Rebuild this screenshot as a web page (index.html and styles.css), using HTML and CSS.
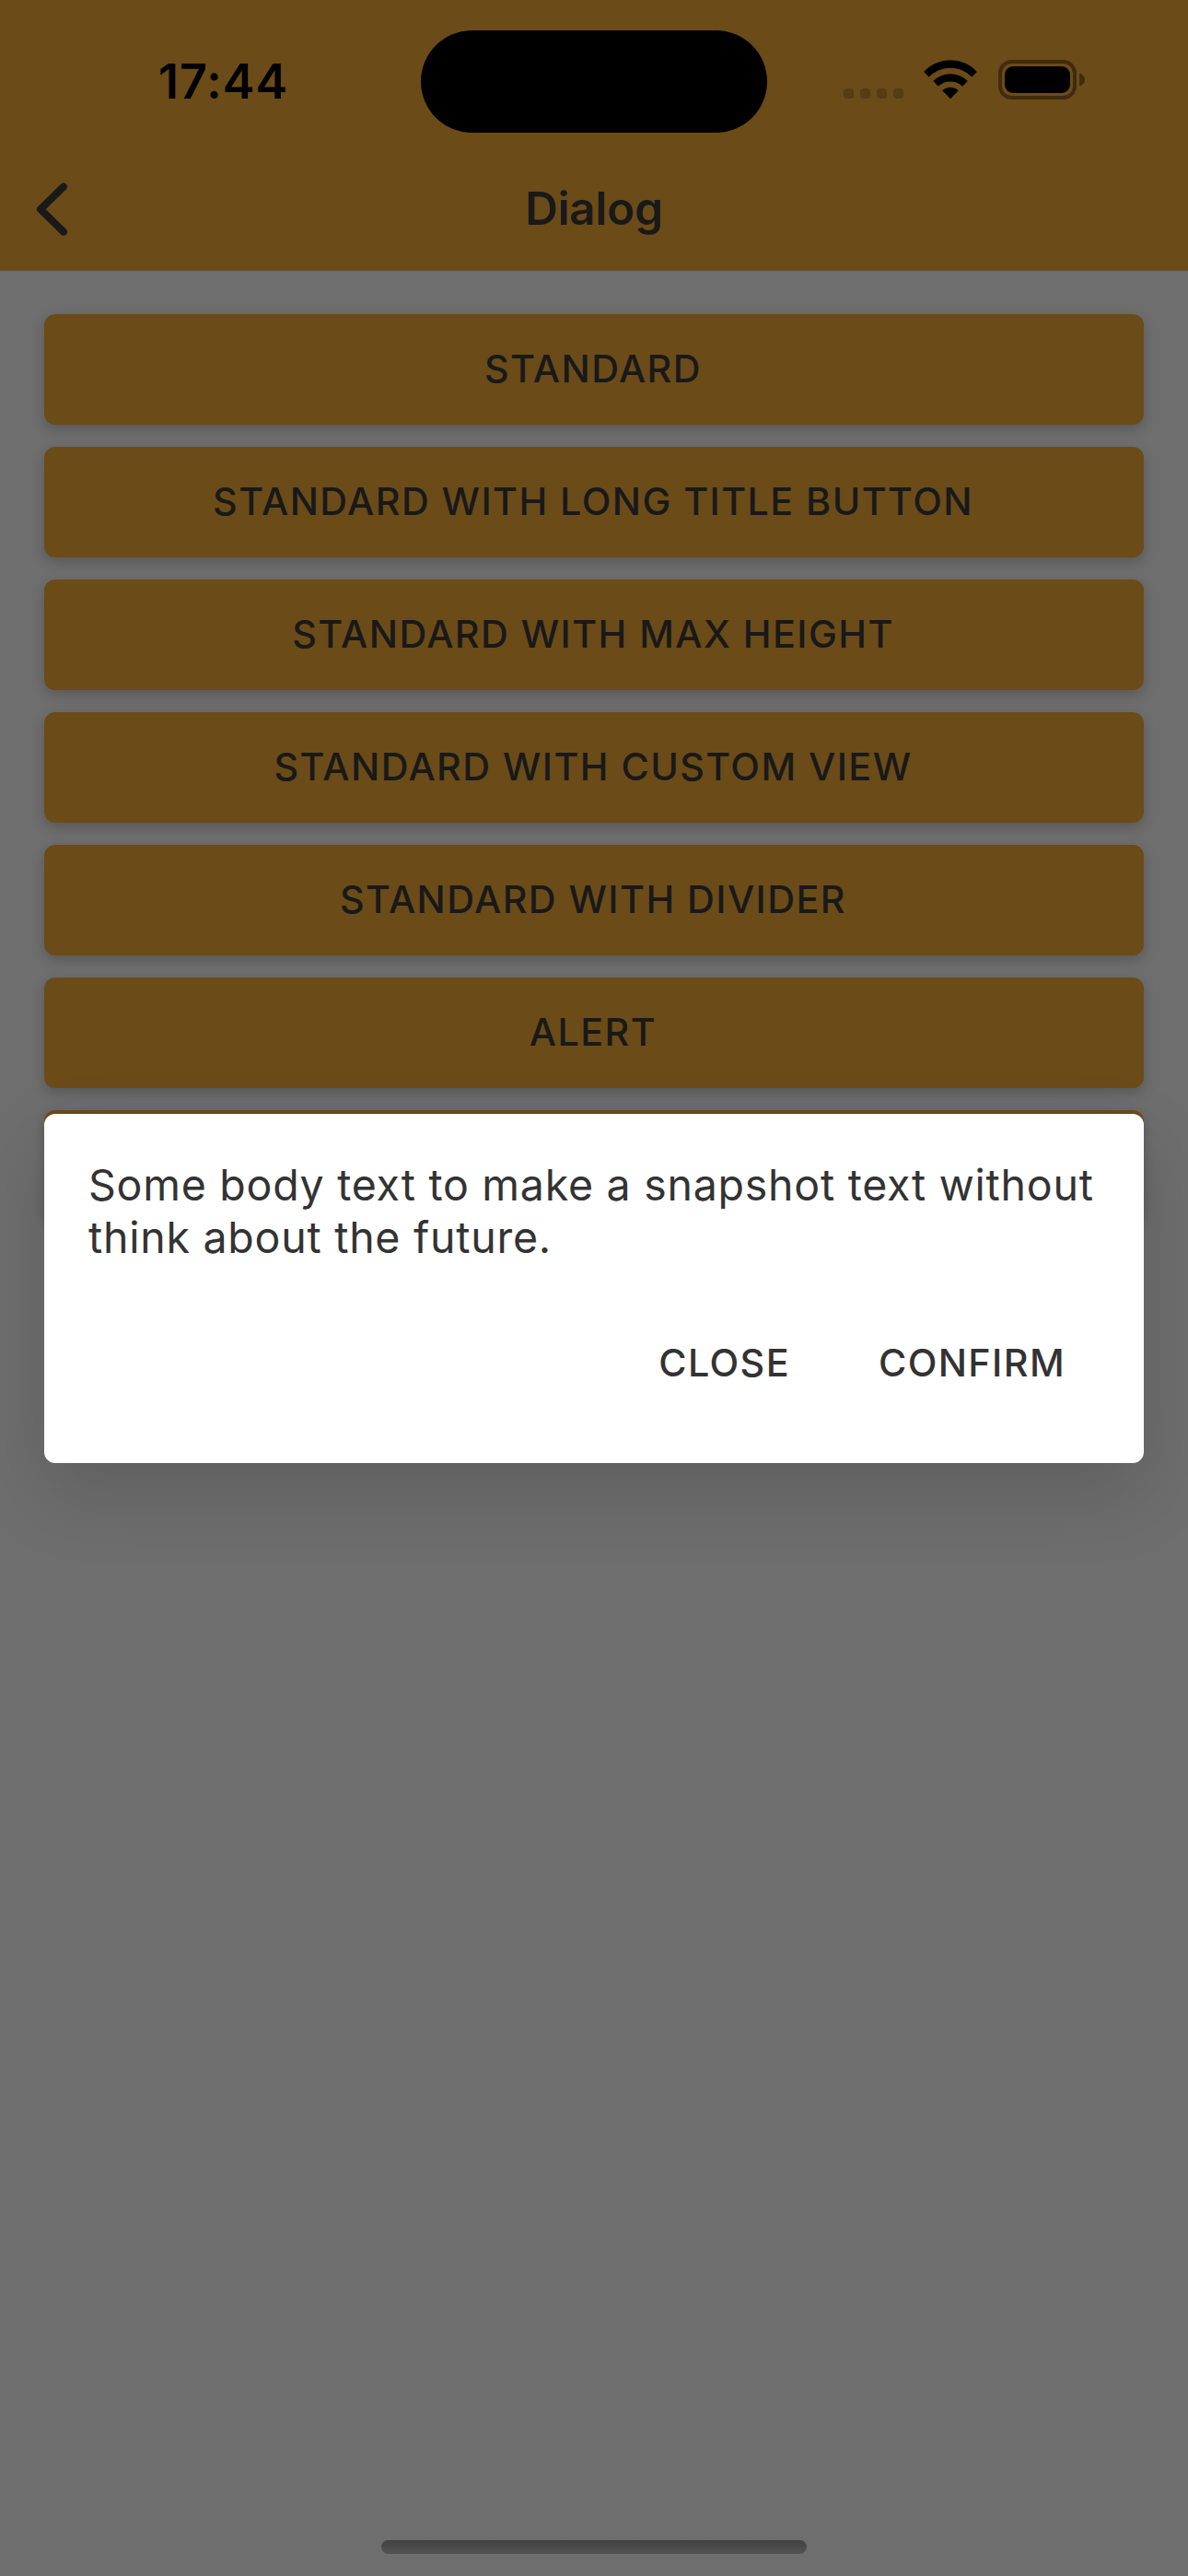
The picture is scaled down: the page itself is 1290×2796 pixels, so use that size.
FILE: index.html
```html
<!DOCTYPE html>
<html lang="en">
<head>
<meta charset="utf-8">
<title>Dialog</title>
<link rel="stylesheet" href="styles.css">
</head>
<body>
<div class="screen">
  <header class="header">
    <div class="status-bar">
      <time class="clock">17:44</time>
      <div class="island"></div>
      <div class="status-icons">
        <div class="cellular"><i></i><i></i><i></i><i></i></div>
        <svg class="wifi" width="58" height="43" viewBox="1003.5 65 58 43" aria-label="Wi-Fi">
          <path d="M1003.7 78A39 39 0 0 1 1061.3 78L1055.9 83.4A33.5 33.5 0 0 0 1009.1 83.4Z"/>
          <path d="M1013.8 88A26.2 26.2 0 0 1 1051.2 88L1045.7 93.7A19.5 19.5 0 0 0 1019.3 93.7Z"/>
          <path d="M1023.7 98.3A12.8 12.8 0 0 1 1041.3 98.3L1032.5 107.2Z"/>
        </svg>
        <svg class="battery" width="95" height="43" viewBox="0 0 95 43" aria-label="Battery">
          <rect x="2" y="2" width="81" height="39" rx="12.5" fill="none" stroke="#3f2c0e" stroke-width="4"/>
          <rect x="7" y="7" width="71" height="29" rx="9"/>
          <path d="M88 14.3Q94 17 94 21.5Q94 26 88 28.7Z" fill="#3f2c0e"/>
        </svg>
      </div>
    </div>
    <nav class="nav-bar">
      <svg class="back" width="36" height="60" viewBox="0 0 36 60" aria-label="Back">
        <path d="M30 5.7L5 30.2L30 54.7" fill="none" stroke="currentColor" stroke-width="8" stroke-linecap="round" stroke-linejoin="round"/>
      </svg>
      <h1 class="title">Dialog</h1>
    </nav>
  </header>
  <main class="list">
    <button class="item">STANDARD</button>
    <button class="item">STANDARD WITH LONG TITLE BUTTON</button>
    <button class="item">STANDARD WITH MAX HEIGHT</button>
    <button class="item">STANDARD WITH CUSTOM VIEW</button>
    <button class="item">STANDARD WITH DIVIDER</button>
    <button class="item">ALERT</button>
    <button class="item"></button>
  </main>
  <div class="home-indicator"></div>
  <div class="overlay">
    <section class="dialog" role="dialog">
      <p class="message">Some body text to make a snapshot text without think about the future.</p>
      <div class="actions">
        <button class="action">CLOSE</button>
        <button class="action">CONFIRM</button>
      </div>
    </section>
  </div>
</div>
</body>
</html>
```
FILE: styles.css
```css
* { box-sizing: border-box; }

body {
  margin: 0;
  font-family: Inter, "Liberation Sans", sans-serif;
}

button {
  margin: 0;
  padding: 0;
  border: 0;
  background: none;
  font: inherit;
}

.screen {
  position: relative;
  display: flex;
  flex-direction: column;
  width: 1290px;
  height: 2796px;
  overflow: hidden;
  background: #6e6e6e;
  color: #191919;
}

.header {
  height: 294px;
  background: #6b4b18;
  border-bottom: 1px solid #645035;
}

.status-bar {
  display: grid;
  grid-template-columns: 457px 376px 457px;
  align-items: start;
  height: 162px;
  color: #000;
}

.clock {
  margin: 56px 0 0 172px;
  font-size: 52.3px;
  font-weight: 600;
  line-height: 64px;
  letter-spacing: 0.9px;
}

.island {
  height: 111px;
  margin-top: 33px;
  border-radius: 56px;
  background: #000;
}

.status-icons {
  display: flex;
  align-items: flex-end;
  margin: 65px 0 0 83px;
}

.cellular {
  display: flex;
  gap: 7px;
  margin: 0 22px 1px 0;
}

.cellular i {
  width: 11px;
  height: 11px;
  border-radius: 4px;
  background: #563c13;
}

.wifi { margin-right: 23px; }

.nav-bar {
  display: grid;
  grid-template-columns: 200px 1fr 200px;
  align-items: center;
  height: 130px;
}

.back { margin-left: 39px; }

.title {
  margin: 0;
  padding-bottom: 2px;
  font-size: 49.5px;
  font-weight: 600;
  line-height: 60px;
  letter-spacing: -0.25px;
  text-align: center;
}

.list {
  display: flex;
  flex-direction: column;
  gap: 24px;
  padding: 47px 48px;
}

.item {
  height: 120px;
  padding: 0 2px 2px 0;
  border-radius: 12px;
  background: #6b4b18;
  box-shadow: 0 5px 14px rgba(0, 0, 0, 0.2);
  color: #191919;
  font-size: 41.3px;
  font-weight: 450;
  line-height: 50px;
  letter-spacing: 1.42px;
}

.home-indicator {
  width: 462px;
  height: 15px;
  margin: auto auto 24px;
  border-radius: 8px;
  background: linear-gradient(#424242, #525252);
}

.overlay {
  position: absolute;
  inset: 0;
  display: flex;
  align-items: center;
  padding: 1px 48px 0;
}

.dialog {
  flex: 1;
  height: 379px;
  padding: 49px 49px 0 48px;
  border-radius: 12px;
  background: #fff;
  box-shadow: 0 33px 84px rgba(0, 0, 0, 0.14);
  color: #333;
}

.message {
  margin: 0 -20px 53px 0;
  font-size: 46.5px;
  line-height: 57px;
  letter-spacing: 0.74px;
}

.actions {
  display: flex;
  justify-content: flex-end;
  gap: 24px;
}

.action {
  height: 108px;
  padding: 0 36px;
  color: #333;
  font-size: 41.3px;
  font-weight: 500;
  line-height: 50px;
  letter-spacing: 1.4px;
}
```
